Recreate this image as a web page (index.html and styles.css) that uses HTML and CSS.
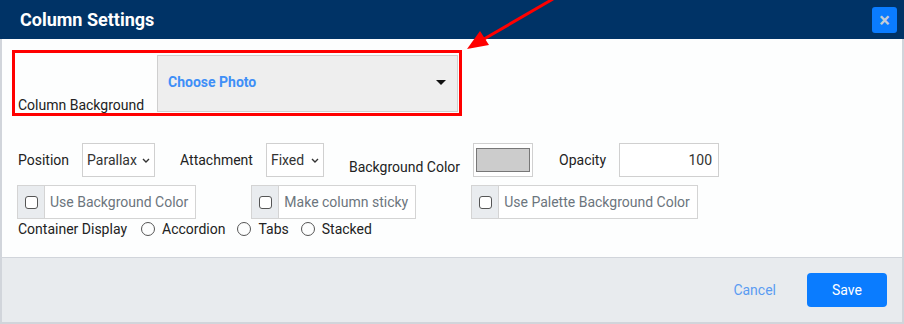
FILE: index.html
```html
<!DOCTYPE html>
<html lang="en">
<head>
    <meta charset="UTF-8">
    <title>Column Settings</title>
    <link rel="stylesheet" href="styles.css">
</head>
<body>
    <div class="modal">
        <div class="modal-header">
            <h2>Column Settings</h2>
            <button class="close-btn">&times;</button>
        </div>

        <div class="modal-body">
            <div class="highlight">
                <label class="bg-label">Column Background</label>
                <div class="photo-select">
                    <span>Choose Photo</span>
                    <span class="caret"></span>
                </div>
            </div>

            <div class="row options">
                <label>Position</label>
                <div class="fake-select sel-position">Parallax
                    <svg class="chev" viewBox="0 0 8 5" width="8" height="5"><path d="M1 1l3 3 3-3" fill="none" stroke="#333" stroke-width="1.4"/></svg>
                </div>
                <label>Attachment</label>
                <div class="fake-select sel-attach">Fixed
                    <svg class="chev" viewBox="0 0 8 5" width="8" height="5"><path d="M1 1l3 3 3-3" fill="none" stroke="#333" stroke-width="1.4"/></svg>
                </div>
                <label class="lower">Background Color</label>
                <div class="swatch"><div class="swatch-fill"></div></div>
                <label>Opacity</label>
                <div class="num-input">100</div>
            </div>

            <div class="row checks">
                <div class="check-group">
                    <span class="addon"><span class="box"></span></span>
                    <span class="check-text">Use Background Color</span>
                </div>
                <div class="check-group">
                    <span class="addon"><span class="box"></span></span>
                    <span class="check-text">Make column sticky</span>
                </div>
                <div class="check-group">
                    <span class="addon"><span class="box"></span></span>
                    <span class="check-text">Use Palette Background Color</span>
                </div>
            </div>

            <div class="row display">
                <label>Container Display</label>
                <span class="radio"></span><span class="radio-text">Accordion</span>
                <span class="radio"></span><span class="radio-text">Tabs</span>
                <span class="radio"></span><span class="radio-text">Stacked</span>
            </div>
        </div>

        <div class="modal-footer">
            <a class="cancel">Cancel</a>
            <button class="save-btn">Save</button>
        </div>
    </div>

    <!-- annotation arrow drawn over the screenshot -->
    <svg class="arrow" width="904" height="324" viewBox="0 0 904 324">
        <line x1="553" y1="-1" x2="484" y2="39" stroke="#f00" stroke-width="3"/>
        <polygon points="467,49 480,31 489,45" fill="#f00"/>
    </svg>
</body>
</html>
```

FILE: styles.css
```css
body {
    margin: 0;
    font-family: 'Roboto', 'Liberation Sans', sans-serif;
    font-size: 14px;
    color: #222;
    background: #fff;
}

.modal {
    width: 904px;
    height: 324px;
    display: flex;
    flex-direction: column;
}

.modal-header {
    height: 39px;
    background-color: #003366;
    display: flex;
    align-items: center;
    justify-content: space-between;
    padding: 0 7px 0 20px;
}

.modal-header h2 {
    margin: 0;
    color: #fff;
    font-size: 18px;
    font-weight: 700;
}

.close-btn {
    width: 25px;
    height: 26px;
    padding: 0;
    border: none;
    border-radius: 3px;
    background-color: #0a7cff;
    color: #c3ccd6;
    font-family: 'Roboto', sans-serif;
    font-size: 20px;
    font-weight: 700;
    line-height: 26px;
    margin-top: 1px;
}

.modal-body {
    flex: 1;
    background-color: #fdfefe;
    border-left: 2px solid #d1d5db;
    border-right: 2px solid #d1d5db;
    padding: 11px 0 0 10px;
}

/* red annotation box */
.highlight {
    width: 444px;
    height: 60px;
    border: 3px solid #f00;
    display: flex;
    align-items: flex-start;
}

.bg-label {
    flex: 1;
    align-self: flex-end;
    line-height: 16px;
    padding-left: 3px;
    white-space: nowrap;
}

.photo-select {
    flex-shrink: 0;
    margin: 2px 1px 0 0;
    width: 278px;
    height: 52px;
    background-color: #eeeeee;
    border: 1px solid #cfcfcf;
    padding: 0 11px 3px 10px;
    display: flex;
    align-items: center;
    justify-content: space-between;
    color: #3f8ff7;
    font-weight: 700;
}

.caret {
    width: 0;
    height: 0;
    border-left: 5px solid transparent;
    border-right: 5px solid transparent;
    border-top: 5px solid #111;
    margin-top: 1px;
}

.row {
    display: flex;
    align-items: center;
    padding-left: 6px;
    white-space: nowrap;
}

.options {
    margin-top: 27px;
    height: 34px;
}

.options label {
    margin-right: 13px;
    line-height: 16px;
}

.options label.lower {
    align-self: flex-end;
    margin-bottom: 2px;
}

.fake-select {
    height: 32px;
    border: 1px solid #d0d0d0;
    background: #fff;
    display: flex;
    align-items: center;
    justify-content: space-between;
    padding: 0 4px 0 4px;
    color: #333;
    margin-right: 25px;
}

.sel-position { width: 63px; }
.sel-attach { width: 48px; }

.chev { margin-top: 1px; }

.swatch {
    width: 54px;
    height: 22px;
    border: 1px solid #d0d0d0;
    padding: 4px 2px 6px 2px;
    margin-right: 26px;
    background: #fff;
}

.swatch-fill {
    height: 22px;
    background: #cccccc;
    border: 1px solid #777;
}

.num-input {
    width: 92px;
    height: 32px;
    line-height: 32px;
    border: 1px solid #d0d0d0;
    background: #fff;
    text-align: right;
    padding-right: 6px;
    color: #333;
}

.checks {
    margin-top: 8px;
    padding-left: 5px;
    gap: 55px;
}

.check-group {
    height: 32px;
    display: flex;
    border: 1px solid #d4d4d4;
    background: #fff;
}

.addon {
    width: 26px;
    background-color: #e9ecef;
    border-right: 1px solid #d4d4d4;
    display: flex;
    align-items: center;
    justify-content: center;
}

.box {
    width: 11px;
    height: 11px;
    border: 1px solid #555;
    border-radius: 3px;
    background: #fff;
}

.check-text {
    color: #6c757d;
    line-height: 32px;
    padding: 0 7px 0 5px;
}

.display {
    margin-top: 2px;
    height: 16px;
    line-height: 16px;
}

.display label {
    margin-right: 14px;
}

.radio {
    width: 12px;
    height: 12px;
    border: 1px solid #555;
    border-radius: 50%;
    margin-right: 7px;
}

.radio-text {
    margin-right: 12px;
}

.modal-footer {
    height: 64px;
    background-color: #e8ebee;
    border-top: 1px solid #d1d5db;
    border-left: 2px solid #d1d5db;
    border-right: 2px solid #d1d5db;
    border-bottom: 2px solid #d1d5db;
    display: flex;
    align-items: center;
    justify-content: flex-end;
    gap: 31px;
    padding-right: 15px;
}

.cancel {
    color: #5a9cf2;
    font-size: 14px;
    margin-top: -1px;
}

.save-btn {
    width: 80px;
    height: 34px;
    border: none;
    border-radius: 4px;
    background-color: #0a7cff;
    color: #fff;
    font-family: 'Roboto', sans-serif;
    font-size: 14px;
}

.arrow {
    position: absolute;
    top: 0;
    left: 0;
    pointer-events: none;
}
```
